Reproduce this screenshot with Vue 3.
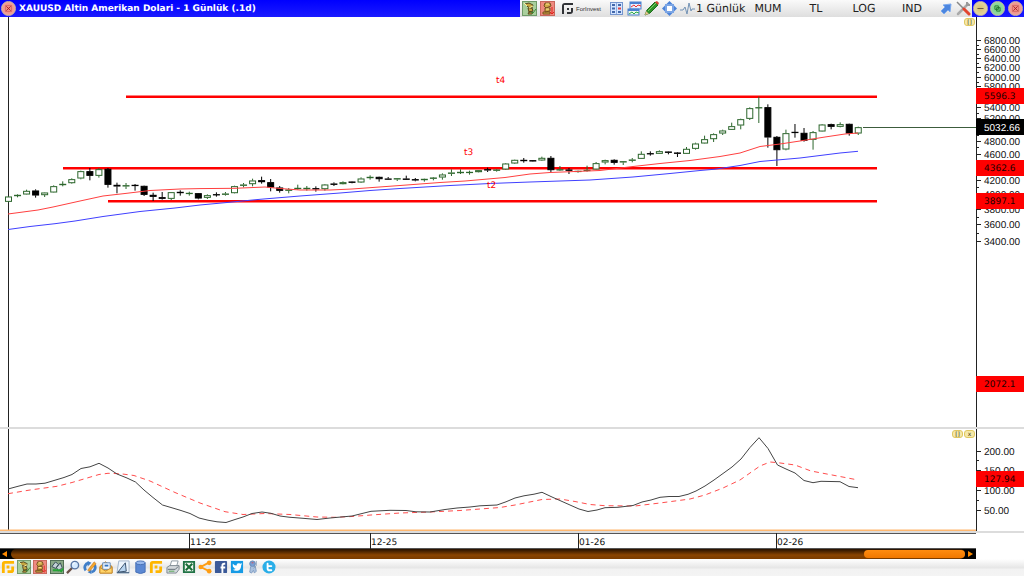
<script setup>
import { computed, ref } from 'vue'

const period = ref('1 Günlük')
const menus = ['MUM', 'TL', 'LOG', 'IND']

const STEP = 9.04
const LEFT = 8.5

// each bar: [type, body top, body bottom, wick top, wick bottom], three units per pixel below base
const segments = [
  {
    base: 140,
    bars: [
      ['g', 170, 185, 168, 187], ['g', 165, 168, 163, 172], ['g', 153, 163, 149, 164],
      ['b', 152, 166, 148, 173], ['g', 158, 165, 157, 171], ['g', 139, 157, 136, 158],
      ['g', 132, 135, 124, 139], ['g', 118, 129, 115, 131], ['g', 94, 115, 92, 118],
      ['b', 94, 107, 84, 121], ['g', 88, 107, 84, 113], ['b', 87, 134, 84, 143],
      ['b', 135, 139, 128, 160], ['g', 136, 139, 129, 147], ['b', 135, 137, 132, 152],
      ['b', 138, 164, 137, 168], ['b', 165, 170, 158, 183], ['b', 172, 176, 156, 179],
      ['g', 157, 176, 156, 180], ['b', 156, 159, 151, 167], ['g', 159, 161, 155, 167],
      ['b', 160, 175, 159, 178], ['g', 166, 173, 163, 177], ['b', 163, 165, 157, 170],
      ['g', 161, 164, 156, 167], ['g', 139, 159, 137, 160], ['g', 134, 137, 129, 142],
      ['g', 122, 132, 116, 139], ['b', 121, 126, 110, 131], ['b', 127, 142, 117, 154],
      ['b', 143, 152, 138, 158], ['g', 149, 152, 144, 160], ['g', 144, 146, 134, 149],
      ['g', 144, 147, 138, 152], ['b', 145, 147, 139, 155], ['g', 134, 147, 132, 152],
      ['b', 131, 134, 127, 138], ['g', 127, 132, 124, 133], ['b', 125, 128, 124, 130],
      ['g', 116, 127, 112, 129], ['g', 111, 114, 106, 119], ['b', 111, 117, 110, 125],
      ['b', 116, 118, 111, 119], ['g', 115, 118, 114, 123], ['b', 116, 119, 107, 120],
      ['b', 118, 121, 114, 124], ['g', 117, 120, 116, 125], ['g', 113, 116, 111, 121],
      ['g', 104, 112, 100, 119], ['g', 98, 101, 88, 108], ['g', 96, 99, 88, 102],
      ['g', 96, 98, 92, 104], ['g', 91, 96, 90, 97], ['b', 88, 91, 83, 96],
      ['g', 89, 92, 87, 95]
    ]
  },
  {
    base: 130,
    bars: [
      ['g', 101, 118, 99, 120], ['g', 90, 100, 89, 102], ['b', 90, 93, 84, 98],
      ['b', 91, 94, 90, 95], ['g', 84, 91, 80, 93], ['b', 84, 120, 78, 126],
      ['g', 118, 121, 108, 123], ['b', 119, 122, 114, 132], ['g', 123, 125, 122, 128],
      ['g', 120, 122, 107, 125], ['g', 100, 118, 96, 119], ['g', 91, 97, 89, 103],
      ['b', 90, 98, 88, 104], ['g', 94, 97, 93, 105], ['g', 89, 92, 84, 97],
      ['g', 72, 86, 64, 87], ['b', 70, 72, 64, 77], ['g', 64, 71, 61, 72],
      ['b', 65, 68, 64, 73], ['b', 68, 71, 66, 81], ['g', 57, 71, 51, 72],
      ['g', 41, 56, 38, 59], ['g', 28, 40, 17, 41], ['g', 13, 27, 10, 36]
    ]
  },
  {
    base: 80,
    bars: [
      ['g', 152, 160, 149, 165], ['g', 139, 149, 128, 150], ['g', 118, 136, 116, 148],
      ['g', 85, 116, 82, 120], ['g', 82, 83, 50, 129], ['b', 82, 172, 73, 203],
      ['b', 171, 210, 168, 258], ['g', 160, 208, 149, 211], ['b', 156, 158, 132, 173],
      ['b', 159, 182, 144, 185], ['g', 157, 179, 153, 209], ['g', 134, 154, 132, 155],
      ['b', 133, 140, 131, 148], ['g', 133, 140, 127, 142], ['b', 132, 160, 131, 167],
      ['g', 142, 160, 140, 165]
    ]
  }
]

const candles = computed(() =>
  segments
    .flatMap(({ base, bars }) =>
      bars.map(([type, ...v]) => ({ type, y: v.map((n) => base + n / 3) }))
    )
    .map((bar, i) => {
      const [top, bottom, high, low] = bar.y
      return { type: bar.type, x: LEFT + i * STEP, top, bottom, high, low }
    })
)

// logarithmic price scale; labels that lie fully under a flag are skipped
const covered = [4400, 5000, 5600]
const priceY = (p) => 241 - 289.3 * Math.log(p / 3400)
const priceTicks = []
for (let p = 3400; p <= 6800; p += 100) {
  const labelled = p % 200 === 0 && !covered.includes(p)
  priceTicks.push({ y: priceY(p), label: labelled ? p.toFixed(2) : '' })
}

const flags = [
  { y: 96, text: '5596.3' },
  { y: 168, text: '4362.6' },
  { y: 201, text: '3897.1' },
  { y: 384, text: '2072.1' }
]

const indicatorTicks = [
  { y: 452, label: '200.00' },
  { y: 461, label: '' },
  { y: 471, label: '150.00' },
  { y: 491, label: '100.00' },
  { y: 501, label: '' },
  { y: 511, label: '50.00' }
]

const levels = [
  { x: 126, y: 96.8 },
  { x: 63, y: 168.2 },
  { x: 108, y: 201.3 }
]

const notes = [
  { x: 496, y: 83, text: 't4' },
  { x: 464, y: 155, text: 't3' },
  { x: 487, y: 188, text: 't2' }
]

const months = [
  { x: 190, label: '11-25' },
  { x: 371, label: '12-25' },
  { x: 579, label: '01-26' },
  { x: 777, label: '02-26' }
]

const fastAverage = '8,214 38,210 53,207 80,201 103,196 125,193.5 150,190.5 180,189 200,188.6 235,188.3 265,187 280,188.5 300,190 330,190 352,189 400,185.5 440,182.5 465,181 505,177.5 530,174 550,172.5 600,170.5 633,166.5 660,163.5 690,160.5 720,156.5 740,153 760,146.5 780,144 800,141 825,137 845,134 858,133'
const slowAverage = '8,229.5 30,226.5 55,223.7 75,221 103,216.5 140,211.5 175,208 200,205 227,202.5 260,199.3 300,196 340,193 370,190.5 400,188.5 450,185.5 490,183.5 530,182 590,180 633,177 670,173.5 700,170.5 715,169.2 740,165.5 760,161.5 800,158 840,153 858,151.3'
const signalLine = '8,493.7 30,490 57,486.3 72,482.5 99,474.5 108,473.3 120,473.7 134,475.5 150,481 175,492.5 200,503 225,511.7 243,514.5 265,513.5 290,514.5 317,517 335,517.3 352,516.5 371,515 400,513 430,512 460,510.5 500,507.5 515,505 542,499.5 560,499 575,501.5 590,504.5 605,505.7 635,506 660,503 690,499 705,495 723,488 740,480 760,466 770,462 778,462.7 795,465 811,471 840,476.5 858,480'
const indicatorLine = '8,489 18,486.3 27,484 36,484 45,483.2 54,480.5 64,477.5 72,474.5 81,468.5 90,466.8 99,463.3 108,468 117,474 127,478 135.5,482 144,490 153,497.5 162.5,505 171,507.5 181,510.5 190,513.5 199,518 208,520.2 217,521.8 226,522.5 235,519.5 243,517 252,513.5 262,512 271,513.3 280,516 289,517.2 303,518.3 317,519.5 330,518 352,516 371,511.3 390,510.3 406,510.5 416,511.8 430,512 445,509.5 457,508 470,507 480,505.8 497,505 506,501.8 515,498 524,495.8 534,494.2 542,492.3 552,497 561,501 570,505 579,509 588,511.5 597,510 605,507.7 618,507.3 633,505.5 642,502 651,500 660,497.3 669,496.5 679,496.5 688,494.3 696,491 705,486 714,480 723,473.5 732,467 741,459 750,447.5 759,437.7 768,448.5 777.5,465 786,469 795,473 804,480.5 813,482.7 821,481.3 840,481.7 849,486.5 858,487.7'

const topIcons = ['grid', 'charts', 'pencil', 'move', 'pulse']
const bottomIcons = [
  { id: 'brand', label: 'Foreks' },
  { id: 'buy', label: 'Al' },
  { id: 'sell', label: 'Sat' },
  { id: 'trade', label: 'Emirler', wide: true },
  { id: 'search', label: 'Ara' },
  { id: 'refresh', label: 'Yenile', wide: true },
  { id: 'open', label: 'Aç' },
  { id: 'draw', label: 'Kaydet', wide: true },
  { id: 'data', label: 'Veri', wide: true },
  { id: 'brand', label: 'Haber' },
  { id: 'print', label: 'Yazdir', wide: true },
  { id: 'excel', label: 'Excel' },
  { id: 'share', label: 'Paylas' },
  { id: 'facebook', label: 'Facebook' },
  { id: 'twitter', label: 'Twitter' },
  { id: 'robot', label: 'Alarm' },
  { id: 'bird', label: 'Tweet' }
]
</script>

<template>
  <div class="chart-window">
    <svg class="sprite" aria-hidden="true">
      <symbol id="buy" viewBox="0 0 15 15">
        <rect x=".5" y=".5" width="14" height="14" fill="#a9cf9c" stroke="#6f9a68" />
        <path d="M3 3l4-1 4 2-1 3-4-1zM6 7l4 0 1 3-4 1zM7 11l4 0-1 2-4 0z" fill="#c4a640" stroke="#574820" />
        <path d="M2 2l3 3M11 5l-4 2" stroke="#fff2a0" />
        <path d="M9 11l2 1 3-4" fill="none" stroke="#3a8a38" />
      </symbol>
      <symbol id="sell" viewBox="0 0 15 15">
        <rect x=".5" y=".5" width="14" height="14" fill="#ee8a80" stroke="#c8665c" />
        <path d="M5 2h5l1 3-5 2-2-2zM5 7h5v3l-5 1zM3 11h7v2H3z" fill="#d0a848" stroke="#76521e" />
        <path d="M6 3h3M6 8h3" stroke="#ffe993" />
        <path d="M12 6v6M10 11l2 2 2-2" fill="none" stroke="#e3221c" />
      </symbol>
      <symbol id="trade" viewBox="0 0 15 15">
        <rect x=".5" y=".5" width="14" height="14" fill="#8aa886" stroke="#4b6950" />
        <path d="M2 7l4-5 3 3-3 4zM7 8l4-5 2 5-4 4z" fill="#c3d1d5" stroke="#344854" />
        <path d="M3 11h7l2 1 2-3" fill="none" stroke="#25a536" stroke-width="2" />
      </symbol>
      <symbol id="brand" viewBox="0 0 15 15">
        <path d="M1 14V4q0-3 3-3h10v3H4v10z" fill="#ffb600" />
        <path d="M6 6h3v3H6zM11 7h3v4q0 3-3 3H7v-3h4z" fill="#ffb600" />
      </symbol>
      <symbol id="logo" viewBox="0 0 15 15">
        <path d="M2 13V5q0-3 3-3h8v2H4v9z" fill="#303236" />
        <path d="M7 7h2v2H7zM11 7h2v3q0 3-3 3H7v-2h4z" fill="#303236" />
      </symbol>
      <symbol id="grid" viewBox="0 0 15 15">
        <rect x="1.500" y="1.500" width="12" height="12" fill="#d5e5ff" stroke="#7495ce" />
        <path d="M3 4h3M3 7.500h3M3 11h3M9 4h3M9 11h3" stroke="#4268ab" stroke-width="2" />
        <path d="M9 7.500h3" stroke="#e44444" stroke-width="2" />
        <path d="M7.500 2v11" stroke="#8eaee1" />
      </symbol>
      <symbol id="charts" viewBox="0 0 15 15">
        <rect x="3" y="1" width="11" height="7" fill="#e8effd" stroke="#4a81d0" />
        <path d="M3 2h11" stroke="#4a81d0" stroke-width="2" />
        <path d="M4 6l3-2 2 2 2-2 3 1" fill="none" stroke="#ef3434" />
        <rect x="1" y="8" width="11" height="6" fill="#edf8ed" stroke="#4a81d0" />
        <path d="M1 9h11" stroke="#4a81d0" stroke-width="2" />
        <path d="M2 13l3-2 2 2 2-2 3 1" fill="none" stroke="#2ca84c" />
      </symbol>
      <symbol id="pencil" viewBox="0 0 15 15">
        <path d="M1 14l2-5 8-8 3 3-8 8z" fill="#30932b" stroke="#1d6e1b" />
        <path d="M4 10l8-8" stroke="#7bcf62" />
        <path d="M1 14l1-4 3 3z" fill="#e8c28e" />
        <path d="M11 1l3 3 1-2-2-2z" fill="#da4436" />
      </symbol>
      <symbol id="move" viewBox="0 0 15 15">
        <path d="M7.500 0l4 4h-8zM15 7.500l-4 4v-8zM7.500 15l-4-4h8zM0 7.500l4-4v8z" fill="#4b83d8" />
        <path d="M4 4h7v7H4z" fill="#fff" stroke="#7ba5e5" stroke-width="2" />
      </symbol>
      <symbol id="pulse" viewBox="0 0 15 15">
        <path d="M0 9h3l2-3 2 7 2-11 2 8 1-2h3" fill="none" stroke="#7292b5" />
      </symbol>
      <symbol id="arrow" viewBox="0 0 15 15">
        <path d="M3 10l4-4-2-2 8-1-1 8-2-2-4 4z" fill="#4c86df" stroke="#7ba9ee" />
      </symbol>
      <symbol id="tools" viewBox="0 0 15 15">
        <path d="M2 13L12 3" stroke="#aaa" stroke-width="2.500" stroke-linecap="round" />
        <path d="M1 1l7 7" stroke="#888" stroke-width="1.500" />
        <path d="M8 8l5 5" stroke="#e2452f" stroke-width="3" stroke-linecap="round" />
        <path d="M11 1v3h3" fill="none" stroke="#999" stroke-width="2" />
      </symbol>
      <symbol id="search" viewBox="0 0 15 15">
        <path d="M1 14l6-6" stroke="#6b5148" stroke-width="2.500" />
        <circle cx="9.500" cy="5.500" r="4" fill="#d5eaff" stroke="#5775a3" stroke-width="1.500" />
        <path d="M7.500 5q0-2 2-2" fill="none" stroke="#fff" />
      </symbol>
      <symbol id="refresh" viewBox="0 0 15 15">
        <path d="M3 11A5 5 0 0 1 6 3M12 5a5 5 0 0 1-3 8" fill="none" stroke="#3f7ec8" stroke-width="3" />
        <path d="M5 1l4 2-4 4zM9 15l-4-2 4-3z" fill="#3f7ec8" />
        <path d="M5 11l7-9 2 2-7 8z" fill="#f6a82b" stroke="#c67b2a" stroke-width=".7" />
      </symbol>
      <symbol id="open" viewBox="0 0 15 15">
        <path d="M1 7l6-5 7 5v7H1z" fill="#f1b942" stroke="#bc7919" />
        <path d="M4 3h8v7H4z" fill="#eef6ff" stroke="#5d86b8" />
        <path d="M1 8l6 4 7-4v6H1z" fill="#ffd369" stroke="#c98d2e" />
        <path d="M6 6h4" stroke="#3372bd" stroke-width="2" />
      </symbol>
      <symbol id="draw" viewBox="0 0 15 15">
        <path d="M3 1h11v13H1z" fill="#ecf4fc" stroke="#9fb3c8" />
        <path d="M2 13L10 3l1 9z" fill="#b8d4ef" stroke="#334b67" />
        <path d="M1 13.500h13" stroke="#405c7a" />
      </symbol>
      <symbol id="data" viewBox="0 0 15 15">
        <path d="M3 3v10q5 3 10 0V3z" fill="#5b88d3" stroke="#466fb4" />
        <ellipse cx="8" cy="3" rx="5" ry="2" fill="#99b9ed" stroke="#466fb4" />
      </symbol>
      <symbol id="print" viewBox="0 0 15 15">
        <path d="M6 1h7l-2 7H4z" fill="#fff" stroke="#8a979f" />
        <path d="M1 8l3-2h10v4l-3 4H1z" fill="#d3d8dc" stroke="#7a858e" />
        <path d="M2 10h8l3-3" fill="none" stroke="#606b74" />
        <path d="M3 12h6" stroke="#50a650" />
      </symbol>
      <symbol id="excel" viewBox="0 0 15 15">
        <path d="M2 2h11v11H2z" fill="#eef5ee" stroke="#217346" stroke-width="2" />
        <path d="M4 4l7 7M11 4l-7 7" stroke="#176a34" stroke-width="2" />
      </symbol>
      <symbol id="share" viewBox="0 0 15 15">
        <path d="M13 2L3 7.500l10 5" fill="none" stroke="#ff9d12" stroke-width="2" />
        <circle cx="3" cy="7.500" r="2.500" fill="#ff9d12" />
        <circle cx="12" cy="3" r="2.500" fill="#ff9d12" />
        <circle cx="12" cy="12" r="2.500" fill="#ff9d12" />
      </symbol>
      <symbol id="facebook" viewBox="0 0 15 15">
        <rect x="1" y="1" width="13" height="13" rx="1" fill="#3b5998" />
        <path d="M12 4h-1q-2 0-2 2v8M7 8h5" fill="none" stroke="#fff" stroke-width="2" />
      </symbol>
      <symbol id="twitter" viewBox="0 0 15 15">
        <rect x="1" y="1" width="13" height="13" fill="#169be5" />
        <path d="M3 4q2 2 4 2 0-3 3-2.500l1 .5 2-.5-1 2q0 5-4 6-3 .5-5-1 2 0 3-1-2-.5-2-1.500-1-.5-1-1.500z" fill="#fff" />
      </symbol>
      <symbol id="robot" viewBox="0 0 15 15">
        <circle cx="7" cy="4" r="3" fill="#7a9fd4" stroke="#6488b5" />
        <path d="M5 7h5l1 5-2 2-1-3-2 3-2-1z" fill="#abc2df" stroke="#7f9cc2" />
        <path d="M11 1v5l-3 3" fill="none" stroke="#8b9fb7" />
        <path d="M6 3h2" stroke="#d74c4c" />
      </symbol>
      <symbol id="bird" viewBox="0 0 15 15">
        <circle cx="7.500" cy="7.500" r="7" fill="#2aaee8" />
        <path d="M6 4v5q0 2 2 2h2M6 6.500h4" fill="none" stroke="#fff" stroke-width="2" stroke-linecap="round" />
      </symbol>
    </svg>

    <header class="title-bar">
      <button class="round red" aria-label="Kapat">
        <svg viewBox="0 0 15 15"><path d="M5 5l5 5M10 5l-5 5" /><path d="M4 4h7v7H4z" opacity=".35" /></svg>
      </button>
      <h1>XAUUSD Altin Amerikan Dolari - 1 Günlük (.1d)</h1>
      <div class="toolbar">
        <button class="icon-btn" aria-label="Al"><svg><use href="#buy" /></svg></button>
        <button class="icon-btn" aria-label="Sat"><svg><use href="#sell" /></svg></button>
        <a class="brand" href="#"><svg><use href="#logo" /></svg><span>ForInvest</span></a>
        <div class="tools">
          <button v-for="icon in topIcons" :key="icon" class="icon-btn" :aria-label="icon">
            <svg><use :href="'#' + icon" /></svg>
          </button>
        </div>
        <button class="text-btn">{{ period }}</button>
        <button v-for="menu in menus" :key="menu" class="text-btn menu">{{ menu }}</button>
        <button class="icon-btn" aria-label="Ayir"><svg><use href="#arrow" /></svg></button>
        <button class="icon-btn" aria-label="Ayarlar"><svg><use href="#tools" /></svg></button>
      </div>
      <div class="window-controls">
        <button class="round tan" aria-label="Küçült"><svg viewBox="0 0 15 15"><path d="M4 7.500h7" /></svg></button>
        <button class="round green" aria-label="Büyüt">
          <svg viewBox="0 0 15 15"><path d="M4.500 4.500h4v4h-4zM6.500 6.500h4v4h-4z" /></svg>
        </button>
        <button class="round red" aria-label="Pencereyi kapat">
          <svg viewBox="0 0 15 15"><path d="M5 5l5 5M10 5l-5 5" /><path d="M4 4h7v7H4z" opacity=".35" /></svg>
        </button>
      </div>
    </header>

    <section class="pane price-pane">
      <svg class="plot" viewBox="0 17 1024 410">
        <path class="axis" d="M8.500 17v410M976.500 17v410" />
        <g v-for="tick in priceTicks" :key="tick.y">
          <path class="axis" :d="`M976 ${Math.round(tick.y) + 0.5}h${tick.label ? 5 : 3}`" />
          <text v-if="tick.label" class="scale" x="984" :y="Math.round(tick.y) + 4">{{ tick.label }}</text>
        </g>
        <line
          v-for="level in levels"
          :key="level.x"
          class="level"
          :x1="level.x"
          :y1="level.y"
          x2="877"
          :y2="level.y"
        />
        <path class="last-price" d="M863 127.500h113" />
        <g v-for="bar in candles" :key="bar.x" :class="['candle', bar.type]">
          <path :d="`M${bar.x} ${bar.high}V${bar.top}M${bar.x} ${bar.bottom}V${bar.low}`" />
          <rect
            :x="bar.x - 3"
            :y="bar.top + 0.3"
            width="6"
            :height="Math.max(0.3, bar.bottom - bar.top - 0.6)"
          />
        </g>
        <polyline class="fast" :points="fastAverage" />
        <polyline class="slow" :points="slowAverage" />
        <text v-for="note in notes" :key="note.text" class="note" :x="note.x" :y="note.y">{{ note.text }}</text>
        <g v-for="flag in flags" :key="flag.text">
          <rect class="flag" x="976" :y="flag.y - 8" width="48" height="16" />
          <text class="flag-text" x="984" :y="flag.y + 3">{{ flag.text }}</text>
        </g>
        <rect x="976" y="119" width="48" height="16" />
        <text class="scale last" x="984" y="131">5032.66</text>
      </svg>
      <div class="pane-buttons">
        <button aria-label="Pencere">[]</button>
      </div>
    </section>

    <section class="pane indicator-pane">
      <svg class="plot" viewBox="0 429 1024 102">
        <path class="axis" d="M8.500 429v101M976.500 429v102" />
        <path class="base-line" d="M0 530.500h976" />
        <g v-for="tick in indicatorTicks" :key="tick.y">
          <path class="axis" :d="`M976 ${tick.y - 0.5}h${tick.label ? 5 : 3}`" />
          <text v-if="tick.label" class="scale" x="984" :y="tick.y + 3">{{ tick.label }}</text>
        </g>
        <polyline class="signal" :points="signalLine" />
        <polyline class="indicator" :points="indicatorLine" />
        <rect class="flag" x="976" y="471" width="48" height="16" />
        <text class="flag-text" x="984" y="482">127.94</text>
      </svg>
      <div class="pane-buttons">
        <button aria-label="Pencere">[]</button>
        <button aria-label="Paneli kapat">x</button>
      </div>
    </section>

    <svg class="plot" viewBox="0 531 1024 18">
      <path class="divider" d="M0 532h1024" />
      <path class="time-line" d="M0 533.500h976M0 548.500h976" />
      <g v-for="month in months" :key="month.label">
        <path class="axis" :d="`M${month.x - 0.5} 533v16`" />
        <text class="month" :x="month.x" y="545">{{ month.label }}</text>
      </g>
    </svg>

    <div class="scrollbar">
      <button class="scroll-arrow" aria-label="Geri"><svg viewBox="0 0 10 10"><path d="M7 2v6L2 5z" /></svg></button>
      <div class="track"><div class="thumb"></div></div>
      <button class="scroll-arrow" aria-label="Ileri"><svg viewBox="0 0 10 10"><path d="M3 2v6l5-3z" /></svg></button>
    </div>

    <footer class="bottom-bar">
      <button
        v-for="(icon, i) in bottomIcons"
        :key="i"
        class="icon-btn"
        :class="{ wide: icon.wide }"
        :aria-label="icon.label"
      >
        <svg><use :href="'#' + icon.id" /></svg>
      </button>
    </footer>
  </div>
</template>

<style>
body {
  margin: 0;
  background: #fff;
}
</style>

<style scoped>
.chart-window {
  min-height: 100vh;
  display: flex;
  flex-direction: column;
  background: #fff;
  font-family: "DejaVu Sans", Verdana, sans-serif;
  color: #222;
}

.sprite {
  display: none;
}

button {
  padding: 0;
  border: 0;
  background: none;
  font-family: inherit;
  color: inherit;
  cursor: pointer;
}

.title-bar {
  display: flex;
  align-items: center;
  height: 17px;
  padding-left: 1px;
  background: linear-gradient(#0000ff, #1a1aff);
}

.title-bar h1 {
  flex: 1;
  margin: 0 0 0 3px;
  padding-top: 2px;
  font-size: 9px;
  line-height: 15px;
  font-weight: bold;
  color: #fff;
  white-space: nowrap;
  text-rendering: geometricPrecision;
}

.toolbar {
  display: flex;
  align-items: center;
  height: 17px;
  width: 452px;
  background: linear-gradient(#fafafa, #dedede);
}

.icon-btn {
  flex: none;
  width: 18px;
  height: 15px;
  display: flex;
  justify-content: center;
}

.icon-btn svg,
.brand svg {
  flex: none;
  width: 15px;
  height: 15px;
}

.brand {
  display: flex;
  align-items: center;
  gap: 1px;
  width: 48px;
  margin-left: 4px;
  color: #333;
  text-decoration: none;
  font-size: 6px;
  font-family: "Liberation Sans", Arial, sans-serif;
}

.tools {
  display: flex;
  width: 88px;
}

.tools .icon-btn {
  flex: 1;
}

.text-btn {
  flex: none;
  width: 48px;
  height: 17px;
  padding-top: 1px;
  font-size: 11px;
  line-height: 16px;
  text-align: left;
  white-space: nowrap;
  text-rendering: geometricPrecision;
}

.menu {
  text-align: center;
}

.window-controls {
  display: flex;
  justify-content: space-around;
  width: 52px;
}

.round {
  flex: none;
  width: 15px;
  height: 15px;
  border-radius: 50%;
  border: 1px solid #c9b9a0;
}

.round svg {
  display: block;
  width: 13px;
  height: 13px;
  fill: none;
  stroke: #5b4a3a;
}

.round.red {
  background: radial-gradient(#f08078, #f0b0a8);
}

.round.red svg {
  stroke: #a02020;
}

.round.tan {
  background: radial-gradient(#d8c070, #e8dcb0);
}

.round.green {
  background: radial-gradient(#70d080, #a8dcb0);
}

.round.green svg {
  stroke: #20702c;
}

.pane {
  position: relative;
}

.price-pane {
  border-bottom: 2px solid #dcdcdc;
}

.plot {
  display: block;
  width: 100%;
  height: auto;
  text-rendering: geometricPrecision;
}

.axis {
  fill: none;
  stroke: #222;
}

.scale {
  font-family: "Liberation Sans", Arial, sans-serif;
  font-size: 10px;
  fill: #111;
}

.scale.last {
  fill: #fff;
}

.flag {
  fill: #f00;
}

.flag-text {
  font-size: 9px;
  fill: #200;
}

.note {
  font-size: 9px;
  fill: #f00;
}

.level {
  stroke: #f00;
  stroke-width: 2.5;
}

.last-price {
  stroke: #3c5c3c;
}

.candle.g path,
.candle.g rect {
  fill: #fff;
  stroke: #2c662c;
}

.candle.b path,
.candle.b rect {
  fill: #000;
  stroke: #000;
}

.fast,
.slow,
.signal,
.indicator {
  fill: none;
}

.fast {
  stroke: #ff4040;
}

.slow {
  stroke: #4040ff;
}

.signal {
  stroke: #ff4d4d;
  stroke-dasharray: 5 4;
}

.indicator {
  stroke: #444;
}

.base-line {
  stroke: #ffb870;
  stroke-width: 2;
}

.divider {
  stroke: #dcdcdc;
  stroke-width: 2;
}

.time-line {
  stroke: #555;
}

.month {
  font-size: 9px;
  fill: #111;
}

.pane-buttons {
  position: absolute;
  top: 1px;
  right: calc(4.6875% + 1px);
  display: flex;
  gap: 1px;
}

.pane-buttons button {
  width: 11px;
  height: 8px;
  border: 1px solid #e0c860;
  border-radius: 3px;
  background: #f5e8a8;
  font-size: 6px;
  line-height: 6px;
  color: #443810;
}

.scrollbar {
  display: flex;
  width: 95.3125%;
  height: 10px;
  background: #000;
}

.scroll-arrow {
  width: 11px;
  height: 10px;
}

.scroll-arrow svg {
  display: block;
  width: 10px;
  height: 10px;
  fill: #ff8a00;
}

.track {
  flex: 1;
  display: flex;
  justify-content: flex-end;
  border-radius: 5px;
  background: linear-gradient(#241000, #8a4400 60%, #7a3c00);
}

.thumb {
  width: 101px;
  height: 8px;
  margin: 1px 0;
  border-radius: 4px;
  background: linear-gradient(#ff8c10, #f07800);
}

.bottom-bar {
  flex: 1;
  display: flex;
  align-items: center;
  gap: 2px;
  min-height: 17px;
  padding: 0 1px;
  background: linear-gradient(#fff, #e6e6e6 52%, #f2f2f2 60%, #f4f4f4);
}

.bottom-bar .icon-btn {
  width: 14px;
}

.bottom-bar .icon-btn.wide {
  width: 15px;
}

.bottom-bar .icon-btn svg {
  width: 14px;
  height: 14px;
}
</style>
